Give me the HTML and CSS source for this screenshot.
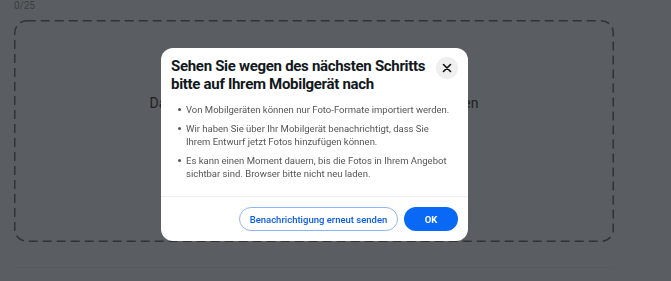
FILE: index.html
```html
<!DOCTYPE html>
<html lang="de">
<head>
    <meta charset="UTF-8">
    <meta name="viewport" content="width=device-width, initial-scale=1.0">
    <title>Fotos hinzufügen</title>
    <link rel="stylesheet" href="styles.css">
</head>
<body>
    <div class="page">
        <div class="counter">0/25</div>
        <div class="dropzone">
            <p class="drop-text">Datei hierher ziehen oder Fotos vom Gerät hochladen</p>
        </div>
        <div class="page-rule"></div>
    </div>

    <!-- Hinweis-Dialog -->
    <div class="dialog" role="dialog">
        <div class="dialog-head">
            <h1>Sehen Sie wegen des nächsten Schritts bitte auf Ihrem Mobilgerät nach</h1>
            <button class="close-btn" aria-label="Schließen">
                <svg width="10" height="10" viewBox="0 0 10 10">
                    <path d="M1.5 1.5 L8.5 8.5 M8.5 1.5 L1.5 8.5" stroke="#111" stroke-width="1.6" stroke-linecap="round"/>
                </svg>
            </button>
        </div>
        <ul class="dialog-list">
            <li>Von Mobilgeräten können nur Foto-Formate importiert werden.</li>
            <li>Wir haben Sie über Ihr Mobilgerät benachrichtigt, dass Sie Ihrem Entwurf jetzt Fotos hinzufügen können.</li>
            <li>Es kann einen Moment dauern, bis die Fotos in Ihrem Angebot sichtbar sind. Browser bitte nicht neu laden.</li>
        </ul>
        <div class="dialog-foot">
            <button class="btn btn-outline">Benachrichtigung erneut senden</button>
            <button class="btn btn-primary">OK</button>
        </div>
    </div>
</body>
</html>
```

FILE: styles.css
```css
* {
    margin: 0;
    padding: 0;
    box-sizing: border-box;
    font-family: "Roboto", "Liberation Sans", Arial, sans-serif;
}

body {
    width: 671px;
    height: 281px;
    overflow: hidden;
    background: #5a5e62;
}

.page {
    padding: 0 57px 0 14px;
}

.counter {
    height: 20px;
    font-size: 10px;
    line-height: 11px;
    color: #3b3e41;
}

/* gestrichelter Rahmen als SVG, damit die Striche lang genug sind */
.dropzone {
    height: 222px;
    background-image: url("data:image/svg+xml,%3Csvg xmlns='http://www.w3.org/2000/svg' width='600' height='222'%3E%3Crect x='0.75' y='0.75' width='598.5' height='220.5' rx='12' fill='none' stroke='%23303335' stroke-width='1.5' stroke-dasharray='9 5'/%3E%3C/svg%3E");
    background-repeat: no-repeat;
    display: flex;
    justify-content: center;
    padding-top: 74px;
}

.drop-text {
    font-size: 14px;
    line-height: 18px;
    color: #1d1f21;
}

.page-rule {
    margin-top: 25px;
    height: 1px;
    background: #555a5e;
}

/* Dialog */
.dialog {
    position: fixed;
    top: 48px;
    left: 161px;
    width: 307px;
    height: 193px;
    background: #fff;
    border-radius: 12px;
    display: flex;
    flex-direction: column;
}

.dialog-head {
    display: flex;
    align-items: flex-start;
    gap: 6px;
    padding: 9px 10px 0 10px;
}

.dialog-head h1 {
    flex: 1;
    font-size: 15px;
    line-height: 18px;
    font-weight: 700;
    letter-spacing: -0.3px;
    color: #111820;
}

.close-btn {
    flex: none;
    width: 22px;
    height: 22px;
    border: none;
    border-radius: 50%;
    background: #efefef;
    display: flex;
    align-items: center;
    justify-content: center;
}

.dialog-list {
    list-style: none;
    padding: 10px 14px 0 17px;
    display: flex;
    flex-direction: column;
    gap: 6px;
}

.dialog-list li {
    position: relative;
    padding-left: 8px;
    font-size: 9.5px;
    line-height: 13px;
    color: #555;
}

.dialog-list li::before {
    content: '';
    position: absolute;
    left: 0;
    top: 5px;
    width: 3px;
    height: 3px;
    border-radius: 50%;
    background: #555;
}

.dialog-foot {
    margin-top: auto;
    border-top: 1px solid #efefef;
    display: flex;
    justify-content: flex-end;
    gap: 6px;
    padding: 10px 10px 10px 0;
}

.btn {
    height: 24px;
    border-radius: 12px;
    font-size: 9.5px;
    font-weight: 500;
    cursor: pointer;
}

.btn-outline {
    width: 159px;
    background: #fff;
    border: 1px solid #8db5f7;
    color: #0a5ce6;
}

.btn-primary {
    width: 54px;
    border: none;
    background: #0968f6;
    color: #fff;
    font-weight: 700;
}
```
